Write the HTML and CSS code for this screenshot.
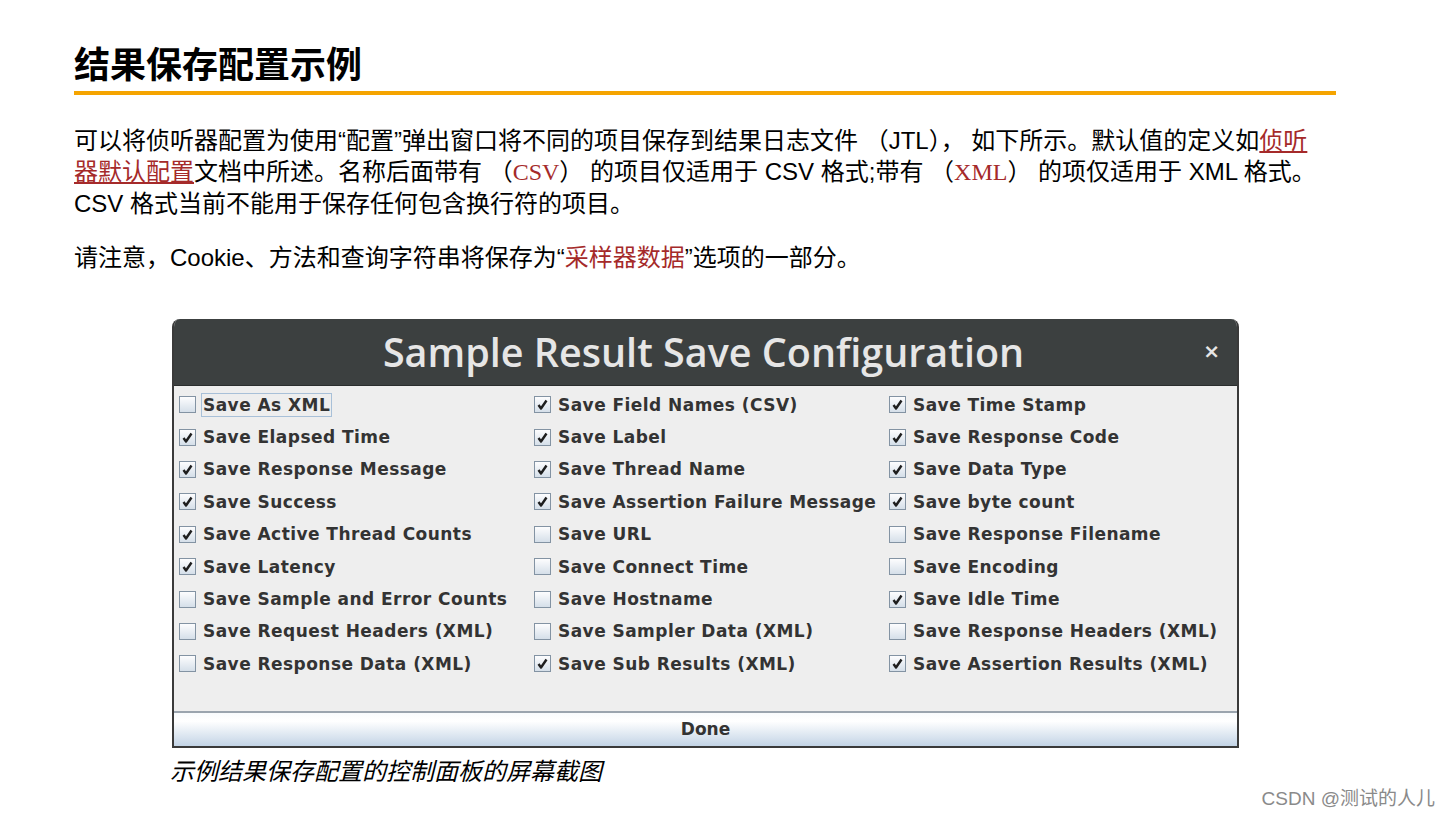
FILE: index.html
```html
<!DOCTYPE html>
<html lang="zh-CN">
<head>
    <meta charset="UTF-8">
    <title>结果保存配置示例</title>
    <link rel="stylesheet" href="styles.css">
</head>
<body>
    <div class="page">
        <h1 class="title">结果保存配置示例</h1>

        <p class="text">可以将侦听器配置为使用“配置”弹出窗口将不同的项目保存到结果日志文件 （JTL）， 如下所示。默认值的定义如<a class="link" href="#">侦听器默认配置</a>文档中所述。名称后面带有 （<span class="code">CSV</span>） 的项目仅适用于 CSV 格式;带有 （<span class="code">XML</span>） 的项仅适用于 XML 格式。CSV 格式当前不能用于保存任何包含换行符的项目。</p>

        <p class="text">请注意，Cookie、方法和查询字符串将保存为“<span class="code">采样器数据</span>”选项的一部分。</p>

        <div class="dialog">
            <div class="dialog-head">
                <span class="dialog-title">Sample Result Save Configuration</span>
                <span class="dialog-close">×</span>
            </div>
            <div class="options" id="options"></div>
            <div class="done">Done</div>
        </div>
        <p class="caption">示例结果保存配置的控制面板的屏幕截图</p>
    </div>
    <div class="mark">CSDN @测试的人儿</div>

    <script>
        // rows are read left to right, as the dialog shows them
        var options = [
            ['Save As XML', false], ['Save Field Names (CSV)', true], ['Save Time Stamp', true],
            ['Save Elapsed Time', true], ['Save Label', true], ['Save Response Code', true],
            ['Save Response Message', true], ['Save Thread Name', true], ['Save Data Type', true],
            ['Save Success', true], ['Save Assertion Failure Message', true], ['Save byte count', true],
            ['Save Active Thread Counts', true], ['Save URL', false], ['Save Response Filename', false],
            ['Save Latency', true], ['Save Connect Time', false], ['Save Encoding', false],
            ['Save Sample and Error Counts', false], ['Save Hostname', false], ['Save Idle Time', true],
            ['Save Request Headers (XML)', false], ['Save Sampler Data (XML)', false], ['Save Response Headers (XML)', false],
            ['Save Response Data (XML)', false], ['Save Sub Results (XML)', true], ['Save Assertion Results (XML)', true]
        ];

        var tick = '<svg viewBox="0 0 15 15"><path d="M3.5 8 L6 11.5 L11.5 3.5" fill="none" stroke="#1e1e1e" stroke-width="2.4" stroke-linejoin="round"/></svg>';
        var list = document.getElementById('options');

        options.forEach(function(item, i) {
            var row = document.createElement('div');
            row.className = 'option';
            var box = '<span class="box">' + (item[1] ? tick : '') + '</span>';
            var label = '<span class="label' + (i === 0 ? ' focused' : '') + '">' + item[0] + '</span>';
            row.innerHTML = box + label;
            list.appendChild(row);
        });
    </script>
</body>
</html>
```

FILE: styles.css
```css
body {
    margin: 0;
    background: #fff;
    font-family: "Liberation Sans", "Noto Sans CJK SC", sans-serif;
    color: #000;
}
.page {
    padding: 41px 0 0 74px;
    width: 1262px;
}
.title {
    margin: 0;
    font-size: 36px;
    font-weight: bold;
    line-height: 50px;
    border-bottom: 4px solid #f5a400;
}
.text {
    margin: 30px 0 0;
    width: 1250px;
    font-size: 24px;
    line-height: 31px;
}
.text + .text {
    margin-top: 23px;
}
.link {
    color: #a52a2a;
    text-decoration: underline;
}
.code {
    color: #a52a2a;
    font-family: "Liberation Serif", "Noto Sans CJK SC", serif;
}
.dialog {
    margin: 45px 0 0 98px;
    width: 1063px;
    border: 2px solid #3a3a3a;
    border-top: none;
    border-radius: 8px 8px 0 0;
    background: #eeeeee;
    overflow: hidden;
}
.dialog-head {
    height: 66px;
    background: #3c4040;
    border-bottom: 1px solid #2a2d2d;
    position: relative;
    display: flex;
    align-items: center;
    justify-content: center;
}
.dialog-title {
    font-family: "Open Sans", sans-serif;
    font-weight: 600;
    font-size: 39.5px;
    color: #e6e6e6;
    margin-right: 4px;
}
.dialog-close {
    position: absolute;
    right: 17px;
    top: 20px;
    color: #e6e6e6;
    font-family: "DejaVu Sans", sans-serif;
    font-weight: bold;
    font-size: 20px;
}
.options {
    display: grid;
    grid-template-columns: 355px 355px 355px;
    grid-auto-rows: 32.4px;
    padding: 2.5px 0 0 5px;
    height: 325px;
    box-sizing: border-box;
}
.option {
    display: flex;
    align-items: center;
    gap: 7px;
    white-space: nowrap;
}
.box {
    width: 15px;
    height: 15px;
    border: 1px solid #8393a3;
    background: linear-gradient(#fdfdfe, #d5dfe9);
    display: flex;
    align-items: center;
    justify-content: center;
    flex: none;
}
.box svg {
    width: 15px;
    height: 15px;
}
.label {
    font-family: "DejaVu Sans", sans-serif;
    font-weight: bold;
    font-size: 17px;
    color: #333;
    letter-spacing: 0.45px;
    padding: 1px 1px;
    border: 1px solid transparent;
    margin-left: -2px;
}
.label.focused {
    border-color: #a8c0d8;
}
.done {
    height: 33px;
    border-top: 2px solid #9aa4ae;
    background: linear-gradient(#f8fbfd, #fff 25%, #c3d4e6);
    text-align: center;
    line-height: 33px;
    font-family: "DejaVu Sans", sans-serif;
    font-weight: bold;
    font-size: 17px;
    color: #333;
}
.caption {
    margin: 8px 0 0 96px;
    font-size: 24px;
    font-style: italic;
    line-height: 32px;
}
.mark {
    position: absolute;
    right: 15px;
    bottom: 8px;
    font-size: 19px;
    color: #8a8a8a;
}
```
